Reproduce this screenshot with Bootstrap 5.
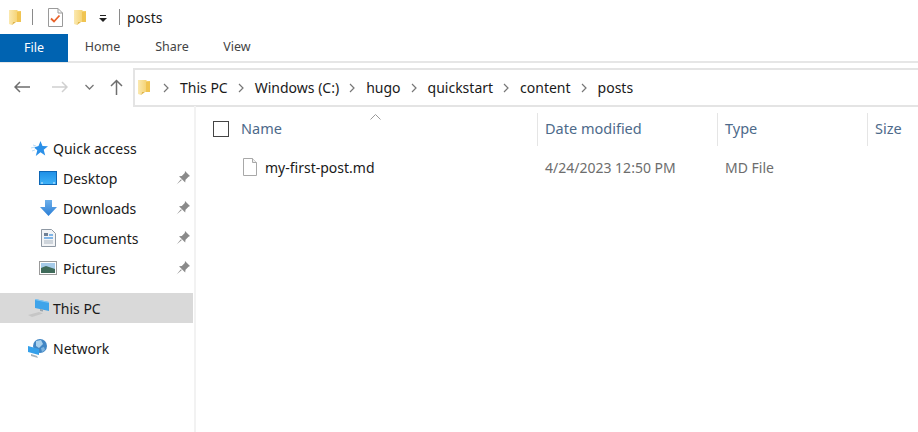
<!DOCTYPE html>
<html lang="en">
<head>
<meta charset="UTF-8">
<title>posts</title>
<link href="https://cdn.jsdelivr.net/npm/bootstrap@5.3.0/dist/css/bootstrap.min.css" rel="stylesheet">
<style>
html, body { height: 432px; overflow: hidden; }
body { font-family: "Noto Sans", "Open Sans", sans-serif; font-size: 14px; color: #1a1a1a; background: #fff; }
svg { display: block; flex: none; }

.title-bar { height: 34px; padding-left: 9px; }
.title-sep { width: 1px; height: 16px; background: #8a8a8a; }
.sep-one { margin-left: 10px; margin-right: 15px; }
.folder-two { margin-left: 11px; }
.qat-arrow { margin-left: 12px; margin-top: 3px; }
.sep-two { margin-left: 12px; }
.title-text { margin-left: 7px; }

.tab-bar { height: 29px; border-bottom: 2px solid #e6e6e6; font-size: 12.5px; color: #444; }
.tab-file { width: 68px; height: 28px; background: #0063b1; color: #fff; }
.tab-home { width: 69px; }
.tab-share { width: 70px; }
.tab-view { width: 54px; margin-left: 3px; }

.addr-row { height: 43px; padding-top: 5px; }
.addr-nav { width: 133px; padding-left: 14px; }
.nav-fwd { margin-left: 22px; }
.nav-drop { margin-left: 17px; }
.nav-up { margin-left: 16px; }
.addr-box { height: 39px; border: 2px solid #e4e4e4; border-right: 0; padding-left: 3px; }
.addr-folder { margin-right: 2px; }
.crumb-sep { margin: 0 11px 0 10px; }

.main-area { height: 326px; }
.side-pane { width: 196px; border-right: 2px solid #f2f2f2; padding-top: 27px; }
.side-row { height: 30px; width: 193px; }
.side-gap { margin-top: 10px; }
.side-row.is-active { background: #d9d9d9; }
.lvl-top { padding-left: 30px; }
.lvl-sub { padding-left: 38px; }
.side-icon { width: 23px; }
.lvl-sub .side-icon { width: 25px; }
.pin-slot { margin-left: auto; margin-right: 3px; }
.nudge-l2 { margin-left: -2px; }
.nudge-l1 { margin-left: -1px; }
.nudge-r1 { margin-left: 1px; }
.nudge-r2 { margin-left: 2px; }
.nudge-r3 { margin-left: 3px; }

.list-pane { min-width: 0; }
.list-head { height: 46px; color: #4d6a8a; font-size: 14.5px; }
.col-check { width: 45px; padding-left: 17px; }
.col-name { width: 296px; }
.col-date { width: 180px; }
.col-type { width: 150px; }
.col-sized { border-left: 1px solid #e5e5e5; height: 33px; padding-left: 7px; }
.check-box { width: 16px; height: 16px; border: 1px solid #444; }
.sort-mark { top: 8px; left: 174px; }
.list-row { height: 30px; }
.cell-file { width: 340px; padding-left: 47px; }
.cell-date { width: 180px; padding-left: 9px; color: #6d6d6d; }
.cell-type { padding-left: 9px; color: #6d6d6d; }
</style>
</head>
<body>
<!-- shared svg bits -->
<svg width="0" height="0" class="position-absolute">
    <defs>
        <linearGradient id="folderFill" x1="0" y1="0" x2="1" y2="0">
            <stop offset="0" stop-color="#fbe9b0"/>
            <stop offset="1" stop-color="#f3ca5c"/>
        </linearGradient>
        <linearGradient id="screenFill" x1="0" y1="0" x2="0" y2="1">
            <stop offset="0" stop-color="#1e8fe6"/>
            <stop offset="1" stop-color="#3fb2f7"/>
        </linearGradient>
        <linearGradient id="arrowFill" x1="0" y1="0" x2="0" y2="1">
            <stop offset="0" stop-color="#6fb0ea"/>
            <stop offset="1" stop-color="#2a7ed6"/>
        </linearGradient>
        <symbol id="folderIcon" viewBox="0 0 13 17">
            <path d="M0 1h8l1 1h3v11l-8 0-1 3-3-1z" fill="url(#folderFill)"/>
            <path d="M8 3h4v10H5l-1 3 1-3h3z" fill="#f0c452"/>
            <path d="M3 16l1-3h3l-4 3z" fill="#e0b64a"/>
        </symbol>
        <symbol id="pinIcon" viewBox="0 0 14 14">
            <path d="M9 0l5 5-1.500.7-3 3-.3 2.800L3 5.300l2.800-.3 3-3z" fill="#8a8a8a"/>
            <path d="M5 8.200L.5 13.500l5.300-4.500z" fill="#8a8a8a"/>
        </symbol>
        <symbol id="crumbIcon" viewBox="0 0 6 10">
            <path d="M1 1l4 4-4 4" fill="none" stroke="#777" stroke-width="1.200"/>
        </symbol>
    </defs>
</svg>

<!-- title bar -->
<div class="title-bar d-flex align-items-center">
    <svg width="13" height="17"><use href="#folderIcon"/></svg>
    <div class="title-sep sep-one"></div>
    <svg width="15" height="19" viewBox="0 0 15 19"><path d="M.5.500h9.500l4.500 4.500v13.500H.5z" fill="#fff" stroke="#9a9a9a"/><path d="M10 .500V5h4.500" fill="none" stroke="#9a9a9a"/><path d="M3 10.500l3 3 5.500-6" fill="none" stroke="#e8622a" stroke-width="1.800"/></svg>
    <svg class="folder-two" width="13" height="17"><use href="#folderIcon"/></svg>
    <svg class="qat-arrow" width="8" height="7" viewBox="0 0 8 7"><path d="M1 0h6v1H1zM0 3h8L4 7z" fill="#222"/></svg>
    <div class="title-sep sep-two"></div>
    <span class="title-text">posts</span>
</div>

<!-- ribbon tabs -->
<div class="tab-bar d-flex">
    <div class="tab-file d-flex align-items-center justify-content-center">File</div>
    <div class="tab-home d-flex align-items-center justify-content-center">Home</div>
    <div class="tab-share d-flex align-items-center justify-content-center">Share</div>
    <div class="tab-view d-flex align-items-center justify-content-center">View</div>
</div>

<!-- address row -->
<div class="addr-row d-flex">
    <div class="addr-nav d-flex align-items-center">
        <svg width="16" height="12" viewBox="0 0 16 12"><path d="M16 6H1M6 1L1 6l5 5" fill="none" stroke="#6e6e6e" stroke-width="1.500"/></svg>
        <svg class="nav-fwd" width="16" height="12" viewBox="0 0 16 12"><path d="M0 6h15M10 1l5 5-5 5" fill="none" stroke="#d0d0d0" stroke-width="1.500"/></svg>
        <svg class="nav-drop" width="9" height="6" viewBox="0 0 9 6"><path d="M.5 1l4 4 4-4" fill="none" stroke="#777" stroke-width="1.300"/></svg>
        <svg class="nav-up" width="13" height="16" viewBox="0 0 13 16"><path d="M6.500 16V1.500M1 7l5.500-5.500L12 7" fill="none" stroke="#6e6e6e" stroke-width="1.500"/></svg>
    </div>
    <div class="addr-box flex-grow-1 d-flex align-items-center">
        <svg class="addr-folder" width="13" height="17"><use href="#folderIcon"/></svg>
        <svg class="crumb-sep" width="6" height="10"><use href="#crumbIcon"/></svg><span>This PC</span>
        <svg class="crumb-sep" width="6" height="10"><use href="#crumbIcon"/></svg><span>Windows (C:)</span>
        <svg class="crumb-sep" width="6" height="10"><use href="#crumbIcon"/></svg><span>hugo</span>
        <svg class="crumb-sep" width="6" height="10"><use href="#crumbIcon"/></svg><span>quickstart</span>
        <svg class="crumb-sep" width="6" height="10"><use href="#crumbIcon"/></svg><span>content</span>
        <svg class="crumb-sep" width="6" height="10"><use href="#crumbIcon"/></svg><span>posts</span>
    </div>
</div>

<div class="main-area d-flex">
    <!-- navigation pane -->
    <div class="side-pane">
        <div class="side-row lvl-top d-flex align-items-center">
            <div class="side-icon"><svg class="nudge-r1" width="17" height="15" viewBox="0 0 17 15"><path d="M9.500 0l2 5 5.500.3-4.300 3.400 1.500 5.800-4.700-3.200L4.800 15l1.500-5.800L3 6.500 7.500 5z" fill="#2b90e8"/><path d="M0 7l4-1M1 10l3-1M2 4l3 1" stroke="#bcdcf6"/></svg></div>
            <span>Quick access</span>
        </div>
        <div class="side-row lvl-sub d-flex align-items-center">
            <div class="side-icon"><svg class="nudge-r1" width="18" height="14" viewBox="0 0 18 14"><rect x=".5" y=".5" width="17" height="13" fill="url(#screenFill)" stroke="#0d66b5"/><path d="M2 12h2M14 12h2" stroke="#d5ecfc"/></svg></div>
            <span>Desktop</span>
            <div class="pin-slot"><svg width="14" height="14"><use href="#pinIcon"/></svg></div>
        </div>
        <div class="side-row lvl-sub d-flex align-items-center">
            <div class="side-icon"><svg class="nudge-r2" width="17" height="16" viewBox="0 0 17 16"><path d="M5 0h7v7h5l-8.500 9L0 7h5z" fill="url(#arrowFill)"/></svg></div>
            <span>Downloads</span>
            <div class="pin-slot"><svg width="14" height="14"><use href="#pinIcon"/></svg></div>
        </div>
        <div class="side-row lvl-sub d-flex align-items-center">
            <div class="side-icon"><svg class="nudge-r3" width="15" height="18" viewBox="0 0 15 18"><path d="M.5.500h10l4 4v13H.5z" fill="#f2f4f6" stroke="#8e98a3"/><path d="M3 4h4v3H3z" fill="#6f8094"/><path d="M8 6h4M3 9h9" stroke="#5ba0e2" stroke-width="1.500"/><path d="M3 12h9M3 14h9" stroke="#a9b4bf"/></svg></div>
            <span>Documents</span>
            <div class="pin-slot"><svg width="14" height="14"><use href="#pinIcon"/></svg></div>
        </div>
        <div class="side-row lvl-sub d-flex align-items-center">
            <div class="side-icon"><svg class="nudge-r1" width="18" height="14" viewBox="0 0 18 14"><rect x=".5" y=".5" width="17" height="13" fill="#fff" stroke="#9a9a9a"/><rect x="2" y="2" width="14" height="10" fill="#a6cbe9"/><path d="M2 7l5-2 9 3v4H2z" fill="#3f6b5a"/></svg></div>
            <span>Pictures</span>
            <div class="pin-slot"><svg width="14" height="14"><use href="#pinIcon"/></svg></div>
        </div>
        <div class="side-row side-gap lvl-top d-flex align-items-center is-active">
            <div class="side-icon"><svg class="nudge-l2" width="21" height="18" viewBox="0 0 21 18"><path d="M7 0l14 3v9L7 9z" fill="#3fa4ea"/><path d="M7 0l14 3v1L7 1z" fill="#86c8f2"/><path d="M12 10l3 .6v2l-3-.6z" fill="#9aa4ac"/><path d="M0 16l11-3 4 1.500-11 3.500z" fill="#c6c6c6"/></svg></div>
            <span>This PC</span>
        </div>
        <div class="side-row side-gap lvl-top d-flex align-items-center">
            <div class="side-icon"><svg class="nudge-l2" width="19" height="19" viewBox="0 0 19 19"><circle cx="12" cy="7" r="7" fill="#4186c4"/><path d="M8 2l5-1 2 4-4 4-3-2z" fill="#a9d0ec"/><path d="M13 9l3-1 1 3-3 2z" fill="#7fb4de"/><path d="M0 7l11 3v6L0 13z" fill="#35a0ea"/><path d="M3 15l6 2 1 2-7-2z" fill="#a6b2bb"/></svg></div>
            <span>Network</span>
        </div>
    </div>

    <!-- file list -->
    <div class="list-pane flex-grow-1">
        <div class="list-head d-flex align-items-center position-relative">
            <svg class="sort-mark position-absolute" width="11" height="6" viewBox="0 0 11 6"><path d="M.5 5.500l5-5 5 5" fill="none" stroke="#9a9a9a"/></svg>
            <div class="col-check"><div class="check-box"></div></div>
            <div class="col-name">Name</div>
            <div class="col-date col-sized d-flex align-items-center">Date modified</div>
            <div class="col-type col-sized d-flex align-items-center">Type</div>
            <div class="col-sized d-flex align-items-center">Size</div>
        </div>
        <div class="list-row d-flex align-items-center">
            <div class="cell-file d-flex align-items-center">
                <svg width="14" height="18" viewBox="0 0 14 18"><path d="M.5.500h9l4 4v13H.5z" fill="#fff" stroke="#a8a8a8"/><path d="M9.500.500v4h4" fill="#eee" stroke="#a8a8a8"/></svg>
                <span class="ms-2">my-first-post.md</span>
            </div>
            <div class="cell-date">4/24/2023 12:50 PM</div>
            <div class="cell-type">MD File</div>
        </div>
    </div>
</div>

<script src="https://cdn.jsdelivr.net/npm/bootstrap@5.3.0/dist/js/bootstrap.bundle.min.js"></script>
</body>
</html>
